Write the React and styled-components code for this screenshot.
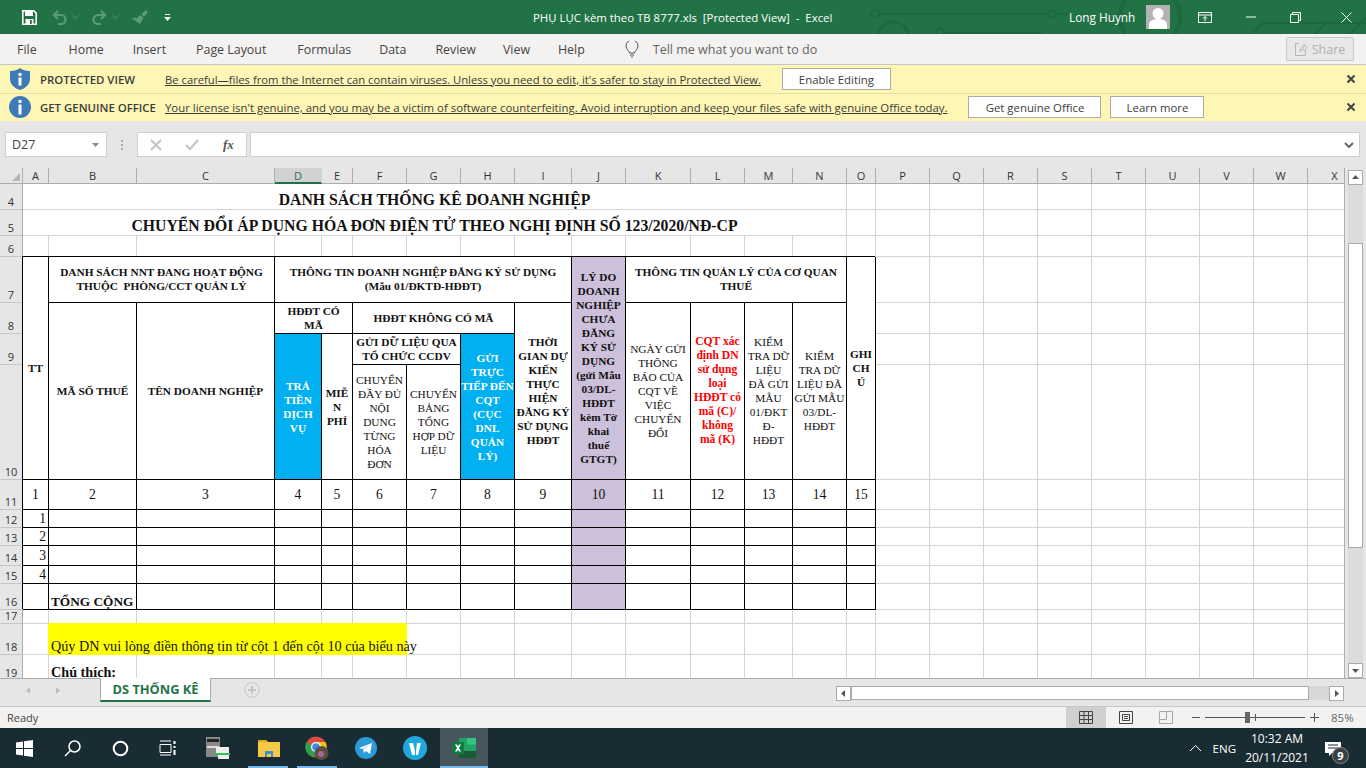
import React from "react";
import styled, { createGlobalStyle } from "styled-components";

const GlobalStyle = createGlobalStyle`
  html, body { margin: 0; padding: 0; height: 100%; overflow: hidden; background: #e6e6e6; }
  body { font-family: "Open Sans", "Liberation Sans", sans-serif; }
  * { box-sizing: border-box; }
`;

const Page = styled.div`
  width: 1366px;
  height: 768px;
  display: flex;
  flex-direction: column;
  overflow: hidden;
`;

/* title bar */
const TitleBar = styled.div`
  position: relative;
  height: 34px;
  flex: none;
  background: #217346;
  display: flex;
  align-items: center;
  color: #fff;
  overflow: hidden;
`;
const Circuit = styled.svg`
  position: absolute;
  left: 850px;
  top: 0;
`;
const Qat = styled.div`
  position: relative;
  display: flex;
  align-items: center;
  width: 455px;
  padding-left: 22px;
`;
const DocTitle = styled.div`
  position: relative;
  width: 455px;
  padding-left: 78px;
  font-size: 11.4px;
  white-space: pre;
`;
const UserName = styled.div`
  position: relative;
  margin-left: 159px;
  font-size: 11.8px;
`;
const Avatar = styled.svg`
  position: relative;
  margin-left: 11px;
`;
const WinButtons = styled.div`
  position: relative;
  display: flex;
  margin-left: 28px;
  gap: 33px;
  align-items: center;
`;

/* tabs */
const TabsBar = styled.div`
  height: 31px;
  flex: none;
  background: #f3f2f1;
  border-bottom: 1px solid #c6c6c6;
  display: flex;
  align-items: center;
  font-size: 12.4px;
  color: #444;
  padding-left: 17px;
`;
const Tab = styled.span`
  margin-right: ${(p) => p.$gap}px;
`;
const TellMe = styled.span`
  display: flex;
  align-items: center;
  gap: 14px;
  margin-left: 14px;
  color: #666;
  font-size: 12.5px;
`;
const ShareBtn = styled.div`
  margin-left: auto;
  margin-right: 12px;
  width: 68px;
  height: 24px;
  border: 1px solid #c8c8c8;
  border-radius: 2px;
  background: #e9e8e7;
  color: #b0b0b0;
  display: flex;
  align-items: center;
  justify-content: center;
  gap: 4px;
  font-size: 12.5px;
`;

/* message bars */
const Banner = styled.div`
  height: ${(p) => p.$h}px;
  flex: none;
  background: #fdf6b4;
  border-bottom: 1px solid ${(p) => (p.$last ? "#fdf6b4" : "#e6dfa0")};
  display: flex;
  align-items: center;
  font-size: 11.4px;
  color: #3c3c3c;
  position: relative;
`;
const BannerIcon = styled.svg`
  flex: none;
  margin-left: ${(p) => p.$left}px;
  margin-right: ${(p) => p.$right}px;
`;
const BannerLabel = styled.span`
  width: 125px;
  flex: none;
  font-weight: 600;
  white-space: nowrap;
`;
const BannerLink = styled.span`
  text-decoration: underline;
  white-space: nowrap;
  font-size: ${(p) => p.$size}px;
`;
const BannerBtn = styled.button`
  height: 22px;
  width: ${(p) => p.$w}px;
  margin-left: ${(p) => p.$left}px;
  flex: none;
  background: #fff;
  border: 1px solid #ababab;
  font: inherit;
  color: #3c3c3c;
  padding: 0;
`;
const BannerClose = styled.svg`
  position: absolute;
  right: 10px;
  top: 50%;
  margin-top: -5px;
`;

/* formula bar */
const FormulaBar = styled.div`
  height: 47px;
  flex: none;
  background: #e6e6e6;
  display: flex;
  align-items: center;
  padding: 0 6px 0 5px;
`;
const NameBox = styled.div`
  width: 102px;
  height: 25px;
  background: #fff;
  border: 1px solid #d0d0d0;
  display: flex;
  align-items: center;
  justify-content: space-between;
  padding: 0 6px;
  font-size: 12.5px;
  color: #444;
`;
const Grip = styled.div`
  width: 2px;
  height: 10px;
  margin: 0 14px 0 14px;
  border-left: 2px dotted #aaa;
`;
const FxGroup = styled.div`
  width: 110px;
  height: 25px;
  background: #fff;
  border: 1px solid #d0d0d0;
  display: flex;
  align-items: center;
  padding-left: 12px;
  gap: 23px;
`;
const FxText = styled.span`
  font-family: "Liberation Serif", serif;
  font-style: italic;
  font-weight: 700;
  font-size: 13px;
  color: #555;
  margin-left: 1px;
`;
const FormulaInput = styled.div`
  flex: 1;
  height: 25px;
  margin-left: 3px;
  background: #fff;
  border: 1px solid #d0d0d0;
  display: flex;
  align-items: center;
  justify-content: flex-end;
  padding-right: 5px;
`;

/* worksheet */
const SheetRow = styled.div`
  height: 510px;
  flex: none;
  display: flex;
  background: #e6e6e6;
`;
const Sheet = styled.div`
  width: 1345px;
  height: 510px;
  flex: none;
  overflow: hidden;
  background: #fff;
  border-right: 1px solid #adadad;
  display: grid;
  grid-template-columns: 23px 26px 88px 138px 47px 31px 54px 54px 54px 57px 54px 65px 54px 48px 54px 29px repeat(9, 54px);
  grid-template-rows: 16px 26px 26px 21px 46px 31px 31px 115px 30px 18px 18px 20px 18px 26px 14px 31px 26px;
  font-family: "Liberation Serif", serif;
  font-size: 11.3px;
  line-height: 14px;
  color: #111;
`;
const ColHead = styled.div`
  background: ${(p) => (p.$active ? "#d2d2d2" : "#e6e6e6")};
  color: ${(p) => (p.$active ? "#217346" : "#333")};
  border-right: 1px solid ${(p) => (p.$active ? "#d2d2d2" : "#adadad")};
  border-bottom: ${(p) => (p.$active ? "2px solid #217346" : "1px solid #adadad")};
  font-family: "Open Sans", "Liberation Sans", sans-serif;
  font-size: 11px;
  line-height: 15px;
  text-align: center;
`;
const Corner = styled(ColHead)`
  position: relative;
  &::after {
    content: "";
    position: absolute;
    right: 2px;
    bottom: 2px;
    border-style: solid;
    border-width: 0 0 8px 8px;
    border-color: transparent transparent #b5b5b5 transparent;
  }
`;
const RowHead = styled.div`
  grid-column: 1;
  grid-row: ${(p) => p.$row};
  background: #e6e6e6;
  border-right: 1px solid #adadad;
  border-bottom: 1px solid #c6c6c6;
  font-family: "Open Sans", "Liberation Sans", sans-serif;
  font-size: 11px;
  line-height: 14px;
  color: #333;
  display: flex;
  align-items: flex-end;
  justify-content: center;
`;
const Blank = styled.div`
  grid-column: ${(p) => p.$col};
  grid-row: ${(p) => p.$row};
  border-right: 1px solid #d4d4d4;
  border-bottom: 1px solid #d4d4d4;
`;
const Title = styled(Blank)`
  font-weight: 700;
  font-size: 15.75px;
  line-height: 18px;
  display: flex;
  align-items: flex-end;
  justify-content: center;
  white-space: nowrap;
`;
const Cell = styled.div`
  grid-column: ${(p) => p.$col};
  grid-row: ${(p) => p.$row};
  border-right: 1px solid #000;
  border-bottom: 1px solid #000;
  box-shadow: -1px -1px 0 #000;
  display: flex;
  align-items: ${(p) => p.$align || "center"};
  justify-content: ${(p) => p.$justify || "center"};
  text-align: center;
  background: ${(p) => p.$bg || "transparent"};
  color: ${(p) => p.$color || "inherit"};
  font-weight: ${(p) => (p.$bold ? 700 : 400)};
  font-size: ${(p) => p.$size || 11.3}px;
  padding: ${(p) => p.$pad || "0"};
  white-space: pre;
`;
const Note = styled(Blank)`
  background: ${(p) => p.$bg || "transparent"};
  border-color: ${(p) => p.$bg || "#d4d4d4"};
  box-shadow: ${(p) => (p.$bg ? `-1px -1px 0 ${p.$bg}` : "none")};
  font-weight: ${(p) => (p.$bold ? 700 : 400)};
  font-size: 14.2px;
  line-height: 16px;
  white-space: nowrap;
  display: flex;
  align-items: flex-end;
  padding-left: 2px;
`;

const VScroll = styled.div`
  width: 21px;
  height: 510px;
  flex: none;
  padding: 2px 3px 0 3px;
  display: flex;
  flex-direction: column;
`;
const ScrollBtn = styled.div`
  width: 15px;
  height: 15px;
  flex: none;
  background: #fff;
  border: 1px solid #ababab;
  display: flex;
  align-items: center;
  justify-content: center;
`;
const ScrollTrack = styled.div`
  flex: 1;
  background: #dcdcdc;
  display: flex;
  flex-direction: column;
  padding-top: 58px;
`;
const VThumb = styled.div`
  height: 305px;
  background: #fff;
  border: 1px solid #ababab;
`;

/* sheet tabs */
const SheetTabs = styled.div`
  height: 29px;
  flex: none;
  background: #e6e6e6;
  border-top: 1px solid #ababab;
  border-bottom: 1px solid #c6c6c6;
  display: flex;
  align-items: flex-start;
`;
const TabArrows = styled.div`
  width: 100px;
  height: 22px;
  display: flex;
  align-items: center;
  padding-left: 24px;
  gap: 20px;
`;
const SheetTab = styled.div`
  width: 111px;
  height: 24px;
  margin-top: -1px;
  background: #fff;
  border-left: 1px solid #ababab;
  border-right: 1px solid #ababab;
  border-bottom: 2px solid #217346;
  color: #217346;
  font-weight: 700;
  font-size: 12.8px;
  display: flex;
  align-items: center;
  justify-content: center;
`;
const AddSheet = styled.svg`
  margin: 3px 0 0 33px;
`;
const HScroll = styled.div`
  margin: 7px 22px 0 auto;
  width: 508px;
  height: 14px;
  display: flex;
`;
const HTrack = styled.div`
  flex: 1;
  background: #d8d8d8;
  display: flex;
`;
const HThumb = styled.div`
  width: 458px;
  background: #fff;
  border: 1px solid #ababab;
`;

/* status bar */
const StatusBar = styled.div`
  height: 21px;
  flex: none;
  background: #f3f2f1;
  display: flex;
  align-items: center;
  padding-left: 7px;
  font-size: 11px;
  color: #444;
`;
const ViewBtn = styled.div`
  width: 40px;
  height: 21px;
  display: flex;
  align-items: center;
  justify-content: center;
  background: ${(p) => (p.$on ? "#cfcfcf" : "transparent")};
`;
const Views = styled.div`
  margin-left: auto;
  display: flex;
`;
const Zoom = styled.div`
  display: flex;
  align-items: center;
  margin-left: 6px;
  margin-right: 14px;
  gap: 5px;
`;
const ZoomTrack = styled.div`
  position: relative;
  width: 100px;
  height: 1px;
  background: #555;
`;
const ZoomKnob = styled.div`
  position: absolute;
  left: 40px;
  top: -5px;
  width: 5px;
  height: 11px;
  background: #666;
`;
const ZoomTick = styled.div`
  position: absolute;
  left: 50px;
  top: -3px;
  width: 1px;
  height: 7px;
  background: #555;
`;
const ZoomPct = styled.span`
  margin-left: 7px;
  width: 21px;
  white-space: nowrap;
  font-size: 11.5px;
  color: #666;
`;

/* taskbar */
const Taskbar = styled.div`
  height: 40px;
  flex: none;
  background: #1a2c33;
  display: flex;
  align-items: center;
  color: #fff;
`;
const TaskSlot = styled.div`
  position: relative;
  width: ${(p) => p.$w || 48}px;
  height: 40px;
  flex: none;
  display: flex;
  align-items: center;
  justify-content: center;
  background: ${(p) => (p.$active ? "#46565c" : "transparent")};
  &::after {
    content: "";
    display: ${(p) => (p.$run ? "block" : "none")};
    position: absolute;
    left: ${(p) => (p.$active ? 0 : 4)}px;
    right: ${(p) => (p.$active ? 0 : 5)}px;
    bottom: 0;
    height: 2px;
    background: #76b9ed;
  }
`;
const Tray = styled.div`
  margin-left: auto;
  display: flex;
  align-items: center;
  height: 40px;
`;
const Lang = styled.span`
  margin: 0 6px 0 11px;
  font-size: 11.5px;
`;
const Clock = styled.div`
  width: 70px;
  text-align: center;
  font-size: 12px;
  line-height: 19px;
`;
const Notif = styled.div`
  position: relative;
  width: 24px;
  height: 24px;
  padding-top: 4px;
  margin: 0 17px 0 13px;
`;
const NotifBadge = styled.div`
  position: absolute;
  left: 7px;
  top: 11px;
  width: 17px;
  height: 17px;
  border-radius: 50%;
  background: #3a3f42;
  border: 1px solid #888;
  font-size: 11px;
  font-weight: 700;
  line-height: 15px;
  text-align: center;
`;

const COLS = "ABCDEFGHIJKLMNOPQRSTUVWX".split("");
const TABLE_COLS = COLS.slice(0, 15);
const OUTSIDE_COLS = COLS.slice(15);
const PURPLE = "#ccc0da";

// sheet row label -> grid track
const ROWS = [4, 5, 6, 7, 8, 9, 10, 11, 12, 13, 14, 15, 16, 17, 18, 19];
const track = (label) => label - 2;

const col = (c) => COLS.indexOf(c) + 2;
const span = (a, b = a) => `${col(a)} / ${col(b) + 1}`;

const Tri = ({ d, fill = "#555", size = 9 }) => (
  <svg width={size} height={size} viewBox="0 0 9 9"><path d={d} fill={fill} /></svg>
);

const Close = () => (
  <BannerClose width="10" height="10" viewBox="0 0 10 10" stroke="#444" strokeWidth="2"><path d="M1.500 1.500l7 7M8.500 1.500l-7 7" /></BannerClose>
);

export default function App() {
  const gridlines = [];
  const addLine = (label, c) => gridlines.push(<Blank key={`${label}${c}`} $col={span(c)} $row={track(label)} />);
  [4, 5].forEach((r) => ["O", ...OUTSIDE_COLS].forEach((c) => addLine(r, c)));
  COLS.forEach((c) => addLine(6, c));
  [7, 8, 9, 10, 11, 12, 13, 14, 15, 16].forEach((r) => OUTSIDE_COLS.forEach((c) => addLine(r, c)));
  COLS.forEach((c) => addLine(17, c));
  COLS.filter((c) => !"BCDEF".includes(c)).forEach((c) => addLine(18, c));
  COLS.filter((c) => c !== "B").forEach((c) => addLine(19, c));

  return (
    <Page>
      <GlobalStyle />
      <TitleBar>
        <Circuit width="516" height="34" viewBox="0 0 516 34" fill="none" stroke="#1d693f" strokeWidth="2">
          <path d="M29 14H198M206 14H222" />
          <circle cx="25" cy="14" r="4" />
          <circle cx="202" cy="14" r="4" />
          <circle cx="43" cy="37" r="15" strokeWidth="3" />
          <circle cx="90" cy="32" r="4" />
          <path d="M94 33H192" />
          <circle cx="300" cy="17" r="30" strokeWidth="4" />
          <path d="M402 34l11-11H516" />
          <path d="M465 34l14-14" />
          <path d="M500 34l16-16" />
        </Circuit>
        <Qat>
          <svg width="15" height="15" viewBox="0 0 15 15">
            <path d="M.8.8h11L14.200 3.200V14.200H.8z" fill="none" stroke="#fff" strokeWidth="1.600" />
            <path d="M3 1h8v5H3z" fill="#fff" />
            <path d="M3.500 9h8v6h-8z" fill="#fff" />
            <path d="M8 10h1.800v4H8z" fill="#217346" />
          </svg>
          <svg width="15" height="15" viewBox="0 0 15 15" fill="none" stroke="#5c9a7a" strokeWidth="2.200" style={{ marginLeft: 15 }}>
            <path d="M6 1L2 5l4 4M2 5h7a4.500 4.500 0 0 1 0 9H6" />
          </svg>
          <svg width="7" height="4" viewBox="0 0 7 4" fill="none" stroke="#5c9a7a" style={{ marginLeft: 5 }}><path d="M.5.5l3 3 3-3" /></svg>
          <svg width="15" height="15" viewBox="0 0 15 15" fill="none" stroke="#5c9a7a" strokeWidth="2.200" style={{ marginLeft: 13 }}>
            <path d="M9 1l4 4-4 4M13 5H6a4.500 4.500 0 0 0 0 9h3" />
          </svg>
          <svg width="7" height="4" viewBox="0 0 7 4" fill="none" stroke="#5c9a7a" style={{ marginLeft: 5 }}><path d="M.5.5l3 3 3-3" /></svg>
          <svg width="16" height="14" viewBox="0 0 16 14" fill="#5c9a7a" style={{ marginLeft: 13 }}>
            <path d="M9.500 4L14 0l2 2-4 5zM8.500 5l3 3-3.500 6L0 8.500l2.500-1 2 1z" />
          </svg>
          <svg width="8" height="9" viewBox="0 0 8 9" style={{ marginLeft: 16 }}>
            <path d="M1 1h5v1H1zM0 4h7L3.500 8z" fill="#fff" />
          </svg>
        </Qat>
        <DocTitle>PHỤ LỤC kèm theo TB 8777.xls  [Protected View]  -  Excel</DocTitle>
        <UserName>Long Huynh</UserName>
        <Avatar width="24" height="24" viewBox="0 0 24 24">
          <rect width="24" height="24" fill="#b3b3b3" />
          <circle cx="12" cy="8.500" r="5.500" fill="#fff" />
          <path d="M3 24v-5c0-3 4-5 9-5s9 2 9 5v5z" fill="#fff" />
        </Avatar>
        <WinButtons>
          <svg width="14" height="11" viewBox="0 0 14 11" fill="none" stroke="#fff">
            <path d="M.5.5h13v10H.5zM.5 3h13M7 9V4.500M5 6.500l2-2 2 2" />
          </svg>
          <svg width="11" height="2" viewBox="0 0 11 2" stroke="#fff" style={{ marginLeft: 1 }}><path d="M0 1h10" /></svg>
          <svg width="11" height="11" viewBox="0 0 11 11" fill="none" stroke="#fff">
            <path d="M.5 2.500h8v8h-8zM2.500 2.500v-2h8v8h-2" />
          </svg>
          <svg width="11" height="11" viewBox="0 0 11 11" stroke="#fff" style={{ marginLeft: 7 }}><path d="M.5.5l10 10M10.500.5l-10 10" /></svg>
        </WinButtons>
      </TitleBar>

      <TabsBar>
        <Tab $gap={32}>File</Tab>
        <Tab $gap={29}>Home</Tab>
        <Tab $gap={30}>Insert</Tab>
        <Tab $gap={31}>Page Layout</Tab>
        <Tab $gap={28}>Formulas</Tab>
        <Tab $gap={29}>Data</Tab>
        <Tab $gap={27}>Review</Tab>
        <Tab $gap={28}>View</Tab>
        <Tab $gap={26}>Help</Tab>
        <TellMe>
          <svg width="14" height="17" viewBox="0 0 14 17" fill="none" stroke="#555">
            <path d="M4.500 12c0-2-3.500-3.500-3.500-7a6 6 0 0 1 12 0c0 3.500-3.500 5-3.500 7zM5 14h4M6 16h2" />
          </svg>
          Tell me what you want to do
        </TellMe>
        <ShareBtn>
          <svg width="13" height="13" viewBox="0 0 13 13" fill="none" stroke="#b5b5b5">
            <path d="M4 .5H.5v12h10V8M5 9c0-4 2-5 4-5V1.500L12.500 5 9 8V6C7 6 6 7 5 9z" />
          </svg>
          Share
        </ShareBtn>
      </TabsBar>

      <Banner $h={29}>
        <BannerIcon $left={10} $right={10} width="20" height="22" viewBox="0 0 20 22">
          <path d="M10 0c2 2 6 3 10 3v8c0 5-4 9-10 11C4 20 0 16 0 11V3c4 0 8-1 10-3z" fill="#3e7ab8" />
          <circle cx="10" cy="6.500" r="1.800" fill="#fff" />
          <rect x="8.500" y="9.500" width="3" height="8" fill="#fff" />
        </BannerIcon>
        <BannerLabel>PROTECTED VIEW</BannerLabel>
        <BannerLink $size={11.26}>Be careful—files from the Internet can contain viruses. Unless you need to edit, it's safer to stay in Protected View.</BannerLink>
        <BannerBtn $w={109} $left={21}>Enable Editing</BannerBtn>
        <Close />
      </Banner>
      <Banner $h={27} $last>
        <BannerIcon $left={9} $right={9} width="22" height="22" viewBox="0 0 22 22">
          <circle cx="11" cy="11" r="11" fill="#3e7ab8" />
          <circle cx="11" cy="5.500" r="1.800" fill="#fff" />
          <rect x="9.500" y="8.500" width="3" height="10" fill="#fff" />
        </BannerIcon>
        <BannerLabel>GET GENUINE OFFICE</BannerLabel>
        <BannerLink $size={11.4}>Your license isn't genuine, and you may be a victim of software counterfeiting. Avoid interruption and keep your files safe with genuine Office today.</BannerLink>
        <BannerBtn $w={133} $left={21}>Get genuine Office</BannerBtn>
        <BannerBtn $w={94} $left={9}>Learn more</BannerBtn>
        <Close />
      </Banner>

      <FormulaBar>
        <NameBox>
          D27
          <Tri d="M1 3h7L4.500 7z" fill="#888" />
        </NameBox>
        <Grip />
        <FxGroup>
          <svg width="12" height="12" viewBox="0 0 12 12" stroke="#c4c4c4" strokeWidth="2"><path d="M1 1l10 10M11 1L1 11" /></svg>
          <svg width="14" height="12" viewBox="0 0 14 12" fill="none" stroke="#c4c4c4" strokeWidth="2"><path d="M1 6l4 4 8-9" /></svg>
          <FxText>fx</FxText>
        </FxGroup>
        <FormulaInput>
          <svg width="10" height="6" viewBox="0 0 10 6" fill="none" stroke="#666" strokeWidth="2"><path d="M1 1l4 4 4-4" /></svg>
        </FormulaInput>
      </FormulaBar>

      <SheetRow>
        <Sheet>
          <Corner />
          {COLS.map((c) => (
            <ColHead key={c} $active={c === "D"}>{c}</ColHead>
          ))}

          {ROWS.map((r) => (
            <RowHead key={r} $row={track(r)}>{r}</RowHead>
          ))}
          {gridlines}

          <Title $col={span("A", "N")} $row={track(4)}>DANH SÁCH THỐNG KÊ DOANH NGHIỆP</Title>
          <Title $col={span("A", "N")} $row={track(5)}>CHUYỂN ĐỔI ÁP DỤNG HÓA ĐƠN ĐIỆN TỬ THEO NGHỊ ĐỊNH SỐ 123/2020/NĐ-CP</Title>

          <Cell $col={span("A")} $row="5 / 9" $bold>TT</Cell>
          <Cell $col={span("B", "C")} $row={5} $bold $align="flex-start" $pad="8px 0 0">{"DANH SÁCH NNT ĐANG HOẠT ĐỘNG\nTHUỘC  PHÒNG/CCT QUẢN LÝ"}</Cell>
          <Cell $col={span("D", "I")} $row={5} $bold $align="flex-start" $pad="8px 0 0">{"THÔNG TIN DOANH NGHIỆP ĐĂNG KÝ SỬ DỤNG\n(Mẫu 01/ĐKTĐ-HĐĐT)"}</Cell>
          <Cell $col={span("J")} $row="5 / 9" $bold $bg={PURPLE}>{"LÝ DO\nDOANH\nNGHIỆP\nCHƯA\nĐĂNG\nKÝ SỬ\nDỤNG\n(gửi Mẫu\n03/DL-\nHĐĐT\nkèm Tờ\nkhai\nthuế\nGTGT)"}</Cell>
          <Cell $col={span("K", "N")} $row={5} $bold $align="flex-start" $pad="8px 0 0">{"THÔNG TIN QUẢN LÝ CỦA CƠ QUAN\nTHUẾ"}</Cell>
          <Cell $col={span("O")} $row="5 / 9" $bold>{"GHI\nCH\nÚ"}</Cell>

          <Cell $col={span("B")} $row="6 / 9" $bold>MÃ SỐ THUẾ</Cell>
          <Cell $col={span("C")} $row="6 / 9" $bold>TÊN DOANH NGHIỆP</Cell>
          <Cell $col={span("D", "E")} $row={6} $bold>{"HĐĐT CÓ\nMÃ"}</Cell>
          <Cell $col={span("F", "H")} $row={6} $bold>HĐĐT KHÔNG CÓ MÃ</Cell>
          <Cell $col={span("I")} $row="6 / 9" $bold>{"THỜI\nGIAN DỰ\nKIẾN\nTHỰC\nHIỆN\nĐĂNG KÝ\nSỬ DỤNG\nHĐĐT"}</Cell>
          <Cell $col={span("K")} $row="6 / 9">{"NGÀY GỬI\nTHÔNG\nBÁO CỦA\nCQT VỀ\nVIỆC\nCHUYỂN\nĐỔI"}</Cell>
          <Cell $col={span("L")} $row="6 / 9" $bold $color="#ff0000" $size={11.6}>{"CQT xác\nđịnh DN\nsử dụng\nloại\nHĐĐT có\nmã (C)/\nkhông\nmã (K)"}</Cell>
          <Cell $col={span("M")} $row="6 / 9">{"KIỂM\nTRA DỮ\nLIỆU\nĐÃ GỬI\nMẪU\n01/ĐKT\nĐ-\nHĐĐT"}</Cell>
          <Cell $col={span("N")} $row="6 / 9">{"KIỂM\nTRA DỮ\nLIỆU ĐÃ\nGỬI MẪU\n03/DL-\nHĐĐT"}</Cell>

          <Cell $col={span("D")} $row="7 / 9" $bold $bg="#00b0f0" $color="#fff">{"TRẢ\nTIỀN\nDỊCH\nVỤ"}</Cell>
          <Cell $col={span("E")} $row="7 / 9" $bold>{"MIỄ\nN\nPHÍ"}</Cell>
          <Cell $col={span("F", "G")} $row={7} $bold>{"GỬI DỮ LIỆU QUA\nTỔ CHỨC CCDV"}</Cell>
          <Cell $col={span("H")} $row="7 / 9" $bold $bg="#00b0f0" $color="#fff">{"GỬI\nTRỰC\nTIẾP ĐẾN\nCQT\n(CỤC\nDNL\nQUẢN\nLÝ)"}</Cell>
          <Cell $col={span("F")} $row={8}>{"CHUYỂN\nĐẦY ĐỦ\nNỘI\nDUNG\nTỪNG\nHÓA\nĐƠN"}</Cell>
          <Cell $col={span("G")} $row={8}>{"CHUYỂN\nBẢNG\nTỔNG\nHỢP DỮ\nLIỆU"}</Cell>

          {TABLE_COLS.map((c, i) => (
            <Cell key={c} $col={span(c)} $row={track(11)} $size={13.6} $pad="1px 0 0" $bg={c === "J" ? PURPLE : undefined}>{i + 1}</Cell>
          ))}
          {[12, 13, 14, 15].map((r, n) => TABLE_COLS.map((c) => (
            <Cell key={`${r}${c}`} $col={span(c)} $row={track(r)} $size={13.6} $justify="flex-end" $pad="1px 2px 0 0" $bg={c === "J" ? PURPLE : undefined}>{c === "A" ? n + 1 : ""}</Cell>
          )))}
          {TABLE_COLS.map((c) => (
            <Cell key={c} $col={span(c)} $row={track(16)} $size={13.3} $bold $align="flex-end" $justify="flex-start" $pad="0 0 0 2px" $bg={c === "J" ? PURPLE : undefined}>{c === "B" ? "TỔNG CỘNG" : ""}</Cell>
          ))}

          <Note $col={span("B", "F")} $row={track(18)} $bg="#ffff00">Qúy DN vui lòng điền thông tin từ cột 1 đến cột 10 của biểu này</Note>
          <Note $col={span("B")} $row={track(19)} $bold>Chú thích:</Note>
        </Sheet>
        <VScroll>
          <ScrollBtn><Tri d="M1 6h7L4.500 2z" /></ScrollBtn>
          <ScrollTrack><VThumb /></ScrollTrack>
          <ScrollBtn><Tri d="M1 3h7L4.500 7z" /></ScrollBtn>
        </VScroll>
      </SheetRow>

      <SheetTabs>
        <TabArrows>
          <Tri d="M6 1v7L2 4.500z" fill="#bdbdbd" />
          <Tri d="M3 1v7l4-3.500z" fill="#bdbdbd" />
        </TabArrows>
        <SheetTab>DS THỐNG KÊ</SheetTab>
        <AddSheet width="16" height="16" viewBox="0 0 16 16" fill="none" stroke="#c4c4c4">
          <circle cx="8" cy="8" r="7.300" />
          <path d="M8 4v8M4 8h8" strokeWidth="2" />
        </AddSheet>
        <HScroll>
          <ScrollBtn><Tri d="M6 1v7L2 4.500z" /></ScrollBtn>
          <HTrack><HThumb /></HTrack>
          <ScrollBtn><Tri d="M3 1v7l4-3.500z" /></ScrollBtn>
        </HScroll>
      </SheetTabs>

      <StatusBar>
        Ready
        <Views>
          <ViewBtn $on>
            <svg width="14" height="13" viewBox="0 0 14 13" fill="none" stroke="#444"><path d="M.5.500h13v12H.5zM.5 4.500h13M.5 8.500h13M5 .5v12M9.500.500v12" /></svg>
          </ViewBtn>
          <ViewBtn>
            <svg width="14" height="13" viewBox="0 0 14 13" fill="none" stroke="#444"><path d="M.5.500h13v12H.5zM3.500 3.500h7v6h-7zM5 5.500h4M5 7.500h4" /></svg>
          </ViewBtn>
          <ViewBtn>
            <svg width="14" height="13" viewBox="0 0 14 13" fill="none" stroke="#a8a8a8"><path d="M.5 8.500v4h13V.5H7.500v8zM.5 8.500V.5h7" /></svg>
          </ViewBtn>
        </Views>
        <Zoom>
          <svg width="8" height="1" viewBox="0 0 8 1"><path d="M0 0h8v1H0z" fill="#555" /></svg>
          <ZoomTrack><ZoomKnob /><ZoomTick /></ZoomTrack>
          <svg width="9" height="9" viewBox="0 0 9 9" stroke="#555"><path d="M0 4.500h9M4.500 0v9" /></svg>
          <ZoomPct>85%</ZoomPct>
        </Zoom>
      </StatusBar>

      <Taskbar>
        <TaskSlot>
          <svg width="17" height="17" viewBox="0 0 17 17" fill="#fff"><path d="M0 2.500l7-1v6.500H0zM8 1.300L17 0v8H8zM0 9h7v6.500l-7-1zM8 9h9v8l-9-1.300z" /></svg>
        </TaskSlot>
        <TaskSlot>
          <svg width="17" height="17" viewBox="0 0 17 17" fill="none" stroke="#fff" strokeWidth="1.500"><circle cx="10.500" cy="6.500" r="5.500" /><path d="M6.500 10.500L1 16" /></svg>
        </TaskSlot>
        <TaskSlot>
          <svg width="17" height="17" viewBox="0 0 17 17" fill="none" stroke="#fff" strokeWidth="2"><circle cx="8.500" cy="8.500" r="6.800" /></svg>
        </TaskSlot>
        <TaskSlot>
          <svg width="18" height="16" viewBox="0 0 18 16" fill="none" stroke="#fff"><path d="M1 4.500h11v8H1zM1 1h11M1 15h11" /><path d="M15.500 1v3M15.500 6v2M15.500 10v5" strokeWidth="2" /></svg>
        </TaskSlot>
        <TaskSlot $w={52}>
          <svg width="26" height="24" viewBox="0 0 26 24">
            <rect x="1" y="1" width="14" height="20" fill="#888" />
            <rect x="2" y="3" width="12" height="3" fill="#222" />
            <rect x="2" y="10" width="12" height="2" fill="#ddd" />
            <rect x="11" y="11" width="13" height="7" fill="#eee" />
            <rect x="9" y="17" width="16" height="2" fill="#2fc25b" />
            <rect x="13" y="19" width="11" height="4" fill="#eee" />
          </svg>
        </TaskSlot>
        <TaskSlot $run $w={49}>
          <svg width="22" height="18" viewBox="0 0 22 18">
            <path d="M0 1h8l2 2h12v15H0z" fill="#f7c843" />
            <path d="M0 1h8l2 2H0z" fill="#e3a51f" />
            <path d="M7 12h8v6H7z" fill="#3d8ed8" />
            <path d="M9 15h4v3H9z" fill="#f7c843" />
          </svg>
        </TaskSlot>
        <TaskSlot $run $w={49}>
          <svg width="25" height="25" viewBox="0 0 25 25">
            <circle cx="11" cy="11" r="10.500" fill="#dd4b3e" />
            <path d="M11 11L1.500 6A10.500 10.500 0 0 0 9 21.300z" fill="#2e9e4f" />
            <path d="M11 11l1 10.400A10.500 10.500 0 0 0 20.500 6H11z" fill="#f4c20d" />
            <circle cx="11" cy="11" r="5" fill="#fff" />
            <circle cx="11" cy="11" r="3.800" fill="#4285f4" />
            <circle cx="16.500" cy="17" r="7" fill="#5b5040" />
            <circle cx="16" cy="18" r="3" fill="#a66a9a" />
          </svg>
        </TaskSlot>
        <TaskSlot>
          <svg width="22" height="22" viewBox="0 0 22 22">
            <circle cx="11" cy="11" r="11" fill="#2a9bd8" />
            <path d="M4 11l13-5-2 11-4-3-2 2-1-4 6-4-7 4z" fill="#fff" />
          </svg>
        </TaskSlot>
        <TaskSlot $w={50}>
          <svg width="24" height="24" viewBox="0 0 24 24">
            <circle cx="12" cy="12" r="12" fill="#1fa8e0" />
            <path d="M6 7h4l2 8V19H9zM18 7h-4l-1 9v3h2z" fill="#fff" />
          </svg>
        </TaskSlot>
        <TaskSlot $active $run>
          <svg width="25" height="22" viewBox="0 0 25 22">
            <path d="M7 1h17v20H7z" fill="#21a366" />
            <path d="M15 1h9v6.500h-9z" fill="#33c481" />
            <path d="M7 14h17v7H7z" fill="#185c37" />
            <path d="M0 5h12v12H0z" fill="#107c41" />
            <path d="M3 7.500h2l1 2 1-2h2l-2 3.500 2 3.500H7l-1-2-1 2H3l2-3.500z" fill="#fff" />
          </svg>
        </TaskSlot>
        <Tray>
          <svg width="13" height="8" viewBox="0 0 13 8" fill="none" stroke="#fff"><path d="M1 7l5.500-5.500L12 7" /></svg>
          <Lang>ENG</Lang>
          <Clock>10:32 AM<br />20/11/2021</Clock>
          <Notif>
            <svg width="17" height="15" viewBox="0 0 17 15" fill="#fff"><path d="M0 0h16v11H7l-3 3v-3H0z" /><path d="M3 3h10M3 6h10" stroke="#1a2c33" /></svg>
            <NotifBadge>9</NotifBadge>
          </Notif>
        </Tray>
      </Taskbar>
    </Page>
  );
}
